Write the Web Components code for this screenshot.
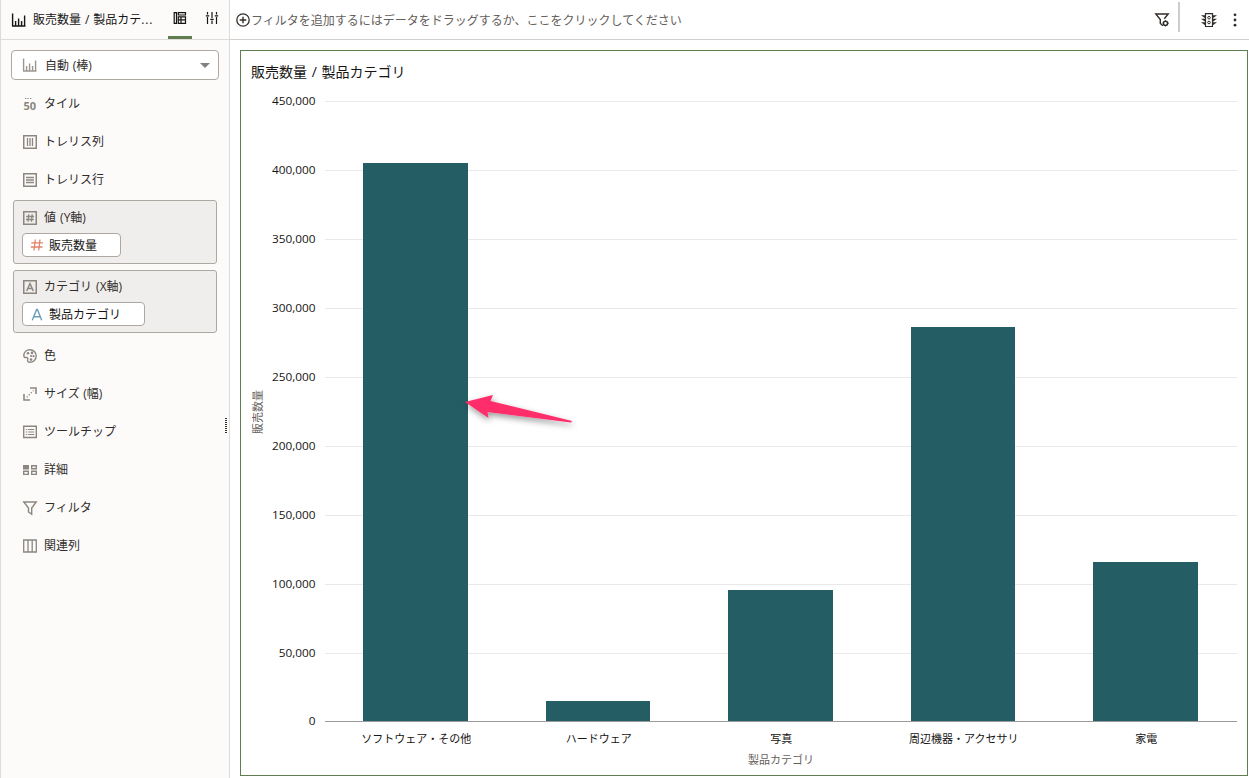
<!DOCTYPE html>
<html lang="ja">
<head>
<meta charset="utf-8">
<title>販売数量 / 製品カテゴリ</title>
<style>
html,body{margin:0;height:100%;overflow:hidden;background:#fff}
body{font-family:"Open Sans","Noto Sans CJK JP",sans-serif;font-size:12px;color:#161513}
</style>
</head>
<body>
<viz-app></viz-app>
<script>
const ICONS = {
  bars: '<path d="M.6 .5v12.700M3.600 8v5M6.600 5.500v7.500M9.600 8v5M12.600 2.500v10.500M0 13h13.500" stroke-width="1.400"/>',
  layout: '<path d="M1.200 1.700h2.300v10.600H1.200zM5.300 1.700h7.200v2.300H5.300zM5.300 5.800h7.200v6.500H5.300zM8 5.800v6.500M5.300 8.800h7.200" stroke-width="1.200"/>',
  sliders: '<path d="M2.500 1v2.500M2.500 6v7M7 1v6M7 9.500V13M11.500 1v2.500M11.500 6v7M.8 4.800h3.400M5.300 8.300h3.400M9.800 4.800h3.400" stroke-width="1.200"/>',
  tile: '<path d="M2 1.500h1.300M4.500 1.500h1.300M7 1.500h1.300" stroke-width="1"/><text x=".5" y="13" font-size="11" font-weight="700" stroke="none" fill="currentColor">50</text>',
  cols: '<path d="M.75.75h12.500v12.500H.75z" stroke-width="1.500"/><path d="M4.500 3v8M7 3v8M9.500 3v8" stroke-width="1.300"/>',
  rows: '<path d="M.75.75h12.500v12.500H.75z" stroke-width="1.500"/><path d="M3 4.500h8M3 7h8M3 9.500h8" stroke-width="1.300"/>',
  hashbox: '<path d="M.75.75h12.500v12.500H.75z" stroke-width="1.500"/><path d="M5.800 3.200l-.8 7.600M9.200 3.200l-.8 7.600M3.200 5.500h7.800M3 8.500h7.800" stroke-width="1.300"/>',
  abox: '<path d="M.75.75h12.500v12.500H.75z" stroke-width="1.500"/><path d="M3.700 11L7 3.500l3.300 7.500M4.800 8.500h4.400" stroke-width="1.500"/>',
  hash: '<path d="M5.300.5L4 11.500M10 .5L8.700 11.500M1.300 3.900h11.700M.8 8h11.700" stroke-width="1.300"/>',
  alpha: '<path d="M2.300 12.300L6.600 1.500h.8l4.300 10.800M3.800 8.700h6.400" stroke-width="1.400"/>',
  color: '<path d="M.8 6.500C1 3 3.700.8 7 .8a6.200 6.200 0 1 1 0 12.400C5 13.200 4.200 12 4.700 10.700 5.200 9.300 4.500 8.300 3 8.500 1.600 8.700.8 8 .8 6.500z" stroke-width="1.400"/><g fill="currentColor" stroke="none"><circle cx="5" cy="4.300" r="1.300"/><circle cx="9" cy="3.900" r="1.300"/><circle cx="10.500" cy="7.200" r="1.100"/><circle cx="8" cy="7" r="1.100"/><circle cx="8" cy="10.600" r="1.300"/></g>',
  size: '<path d="M7 1h6v6M1 7v6h6" stroke-width="1.600"/><path d="M3.700 10.300l6.800-6.800" stroke-width="1.200" stroke-dasharray="1.400 1.500"/>',
  tooltip: '<path d="M.7 1.200h12.600v11.300H.7z" stroke-width="1.400"/><path d="M2.800 4.500h1.500M5.200 4.500h6M2.800 7h1.500M5.200 7h6M2.800 9.500h1.500M5.200 9.500h6" stroke-width="1.200"/>',
  detail: '<path d="M0 2h6v4.500H0z" fill="currentColor" stroke="none"/><path d="M8.700 2.700h4.600v3.100H8.700zM.7 8.300h4.600v3.100H.7zM8.700 8.300h4.600v3.100H8.700z" stroke-width="1.400"/>',
  filter: '<path d="M.8 1h12.400L8.700 7v6.200L5.500 11V7z" stroke-width="1.400"/>',
  related: '<path d="M.7 1h12.600v12H.7zM5 1v12M9.200 1v12" stroke-width="1.300"/>',
  plus: '<circle cx="7" cy="7" r="6.200" stroke-width="1.300"/><path d="M7 3.700v6.600M3.700 7h6.600" stroke-width="1.400"/>',
  filtergear: '<path d="M8 12.800L5.300 10.500V6.500L.8 1h12.400L9.300 5.800" stroke-width="1.400"/><circle cx="10.500" cy="10.300" r="2.100" stroke-width="1.500"/><path d="M10.500 7.300v1M10.500 12.400v1M7.600 10.200h1M12.700 10.200h1"/>',
  traffic: '<path d="M3.500.7h7v12.800h-7zM3.500 2.800H.8l2.700 2M3.500 6.300H.8l2.700 2M3.500 9.800H.8l2.700 2M10.500 2.800h2.700l-2.700 2M10.500 6.300h2.700l-2.700 2M10.500 9.800h2.700l-2.700 2" stroke-width="1.200"/><circle cx="7" cy="4.700" r="1.300"/><circle cx="7" cy="9.500" r="1.300"/>',
  more: '<g fill="currentColor" stroke="none"><circle cx="7" cy="1.800" r="1.400"/><circle cx="7" cy="7" r="1.400"/><circle cx="7" cy="12.200" r="1.400"/></g>'
};

class VizIcon extends HTMLElement {
  connectedCallback() {
    if (this.shadowRoot) return;
    this.attachShadow({mode: 'open'}).innerHTML = `<style>:host{display:block;flex:none;width:14px;height:14px}svg{display:block;overflow:visible}</style>
      <svg width="14" height="14" viewBox="0 0 14 14" fill="none" stroke="currentColor">${ICONS[this.getAttribute('name')]}</svg>`;
  }
}
customElements.define('viz-icon', VizIcon);

class GrammarRow extends HTMLElement {
  connectedCallback() {
    if (this.shadowRoot) return;
    this.attachShadow({mode: 'open'}).innerHTML = `<style>
      :host{display:flex;align-items:center;height:38px;gap:7px;padding-left:22px;line-height:18px;color:#312d2a;white-space:nowrap;word-spacing:.5px}
      viz-icon{color:#8b8680}
      </style><viz-icon name="${this.getAttribute('icon')}"></viz-icon><slot></slot>`;
  }
}
customElements.define('grammar-row', GrammarRow);

class DropZone extends HTMLElement {
  connectedCallback() {
    if (this.shadowRoot) return;
    this.attachShadow({mode: 'open'}).innerHTML = `<style>
      :host{display:block;box-sizing:border-box;margin-left:12px;width:204px;border:1px solid #aea8a2;border-radius:3px;background:#f0eeec;color:#312d2a;word-spacing:1px}
      .head{display:flex;box-sizing:border-box;align-items:center;gap:7px;height:var(--head,32px);padding:var(--drop,0) 0 0 9px;line-height:18px}
      viz-icon{color:#8b8680}
      </style><div class="head"><viz-icon name="${this.getAttribute('icon')}"></viz-icon><span>${this.getAttribute('label')}</span></div><slot></slot>`;
  }
}
customElements.define('drop-zone', DropZone);

class DataPill extends HTMLElement {
  connectedCallback() {
    if (this.shadowRoot) return;
    this.attachShadow({mode: 'open'}).innerHTML = `<style>
      :host{display:flex;box-sizing:border-box;align-items:center;gap:5px;height:24px;margin-left:8px;padding:2px 0 0 7px;border:1px solid #aea8a2;border-radius:4px;background:#fff;line-height:18px;color:#161513}
      :host([icon=hash]) viz-icon{color:#e08468}
      :host([icon=alpha]) viz-icon{color:#6a9eb5}
      </style><viz-icon name="${this.getAttribute('icon')}"></viz-icon><slot></slot>`;
  }
}
customElements.define('data-pill', DataPill);

class VizSidebar extends HTMLElement {
  connectedCallback() {
    if (this.shadowRoot) return;
    this.attachShadow({mode: 'open'}).innerHTML = `<style>
      :host{display:block;position:relative;box-sizing:border-box;width:230px;height:100%;background:#fcfbfa;border-left:1px solid #dedcda;border-right:1px solid #dedcda}
      header{display:flex;height:39px;border-bottom:1px solid #dedcda;padding-left:11px;align-items:center}
      .title{flex:none;width:123px;margin-left:7px;padding-top:1px;line-height:18px;white-space:nowrap;word-spacing:.8px}
      .dots{letter-spacing:.9px}
      .tab{display:flex;flex:none;box-sizing:border-box;justify-content:center;align-items:center;width:24px;height:39px;margin-left:8px;border-bottom:3px solid transparent}
      .active{margin-left:12px;border-bottom-color:#5f7d4f}
      .select{display:flex;box-sizing:border-box;align-items:center;width:208px;height:30px;margin:10px 0 5px 10px;border:1px solid #aea8a2;border-radius:4px;background:#fff;padding:0 8px 0 11px;gap:8px;line-height:18px;color:#312d2a}
      .select span{padding-top:2px;word-spacing:.6px}
      .select viz-icon{color:#9b9690}
      .caret{margin-left:auto;border:5px solid transparent;border-top-color:#85817c;border-bottom:0}
      .z1{margin-top:1px;height:64px;--drop:2px}
      .z2{margin:6px 0 4px 12px;height:63px;--head:31px;--drop:1px}
      .grip{position:absolute;right:2px;top:418px;width:2px;height:15px;background:repeating-linear-gradient(#312d2a 0 1px,transparent 1px 2px)}
      </style>
      <header><viz-icon name="bars"></viz-icon><div class="title">販売数量 / 製品カテ<span class="dots">...</span></div>
        <span class="tab active"><viz-icon name="layout"></viz-icon></span><span class="tab"><viz-icon name="sliders"></viz-icon></span></header>
      <div class="select"><viz-icon name="bars"></viz-icon><span>自動 (棒)</span><i class="caret"></i></div>
      <grammar-row icon="tile">タイル</grammar-row>
      <grammar-row icon="cols">トレリス列</grammar-row>
      <grammar-row icon="rows">トレリス行</grammar-row>
      <drop-zone class="z1" icon="hashbox" label="値 (Y軸)"><data-pill icon="hash" style="width:99px">販売数量</data-pill></drop-zone>
      <drop-zone class="z2" icon="abox" label="カテゴリ (X軸)"><data-pill icon="alpha" style="width:123px">製品カテゴリ</data-pill></drop-zone>
      <grammar-row icon="color">色</grammar-row>
      <grammar-row icon="size">サイズ (幅)</grammar-row>
      <grammar-row icon="tooltip">ツールチップ</grammar-row>
      <grammar-row icon="detail">詳細</grammar-row>
      <grammar-row icon="filter">フィルタ</grammar-row>
      <grammar-row icon="related">関連列</grammar-row>
      <i class="grip"></i>`;
  }
}
customElements.define('viz-sidebar', VizSidebar);

class FilterBar extends HTMLElement {
  connectedCallback() {
    if (this.shadowRoot) return;
    this.attachShadow({mode: 'open'}).innerHTML = `<style>
      :host{display:flex;align-items:center;box-sizing:border-box;height:40px;border-bottom:1px solid #d1cfcc;padding:0 7px 0 6px;color:#312d2a}
      .hint{margin-left:1px;padding-top:2px;color:#65605b;line-height:18px;flex:1}
      .sep{width:2px;height:30px;margin:0 22px 6px 9px;background:#d0ccc8}
      .more{margin-left:12px}
      </style><viz-icon name="plus"></viz-icon><span class="hint">フィルタを追加するにはデータをドラッグするか、ここをクリックしてください</span>
      <viz-icon name="filtergear"></viz-icon><i class="sep"></i><viz-icon name="traffic"></viz-icon><viz-icon class="more" name="more"></viz-icon>`;
  }
}
customElements.define('filter-bar', FilterBar);

class BarChart extends HTMLElement {
  connectedCallback() {
    if (this.shadowRoot) return;
    const ticks = [101, 170, 239, 308, 377, 446, 515, 584, 653, 721];
    const bars = [['ソフトウェア・その他', 363, 105, 163], ['ハードウェア', 546, 104, 701], ['写真', 728, 105, 590], ['周辺機器・アクセサリ', 911, 104, 327], ['家電', 1093, 105, 562]];
    let s = '';
    ticks.forEach((y, i) => {
      if (i < 9) s += `<rect x="325" y="${y}" width="912" height="1" fill="#e9e9ea"/>`;
      s += `<text class="tick" transform="translate(315.500 ${y + 4}) scale(1.075 1)" text-anchor="end">${(450000 - i * 50000).toLocaleString('en-US')}</text>`;
    });
    bars.forEach(([n, x, w, y], i) => {
      s += `<rect x="${x}" y="${y}" width="${w}" height="${721 - y}" fill="#255d65"/><text x="${416.3 + i * 182.5}" y="743" text-anchor="middle">${n}</text>`;
    });
    this.attachShadow({mode: 'open'}).innerHTML = `<style>
      :host{display:block;box-sizing:border-box;width:1008px;height:726px;border:1px solid #5f7d4f;background:#fff}
      h2{margin:0;padding:11px 0 0 10px;height:30px;box-sizing:border-box;font-size:14px;line-height:20px;font-weight:400;word-spacing:1px}
      svg{display:block;font-size:11px}
      text{fill:#161513}.tick{font-size:11px}.axis{fill:#65605b}
      </style><h2>販売数量 / 製品カテゴリ</h2>
      <svg width="1006" height="694" viewBox="241 81 1006 694">
      <defs><filter id="sh" x="-20%" y="-50%" width="140%" height="220%"><feDropShadow dx="1" dy="3" stdDeviation="3" flood-color="#000" flood-opacity=".4"/></filter></defs>
      ${s}<rect x="325" y="721" width="912" height="1" fill="#9b9b9b"/>
      <text class="axis" x="781" y="764" text-anchor="middle">製品カテゴリ</text>
      <text class="axis" transform="translate(261.500 412) rotate(-90)" text-anchor="middle">販売数量</text>
      <path d="M465 402L493 395L490.500 401L572 421L571 422.500L487.500 412L488.500 418Z" fill="#ff2d6b" filter="url(#sh)"/></svg>`;
  }
}
customElements.define('bar-chart', BarChart);

class VizApp extends HTMLElement {
  connectedCallback() {
    if (this.shadowRoot) return;
    this.attachShadow({mode: 'open'}).innerHTML = `<style>
      :host{display:grid;grid-template-columns:230px 1fr;height:778px;width:1249px}
      bar-chart{margin:10px 0 0 10px}
      </style><viz-sidebar></viz-sidebar><main><filter-bar></filter-bar><bar-chart></bar-chart></main>`;
  }
}
customElements.define('viz-app', VizApp);
</script>
</body>
</html>
